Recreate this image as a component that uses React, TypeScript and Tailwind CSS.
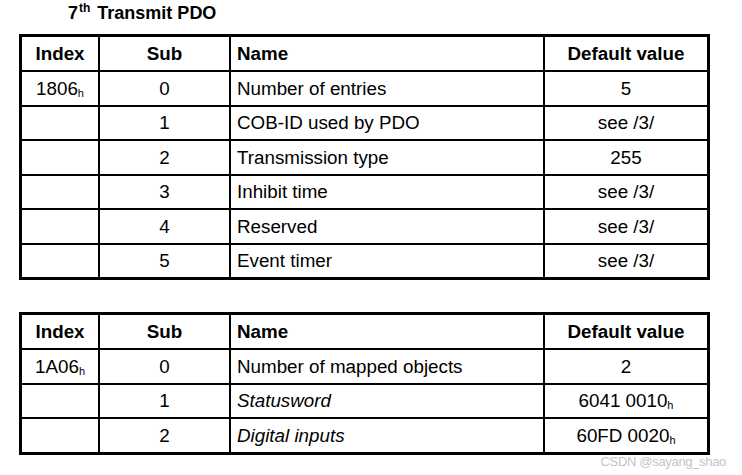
const font = { fontFamily: '"Liberation Sans", Arial, sans-serif' };

type Row = { index?: string; sub: string; name: string; value: string; valueSub?: boolean; italic?: boolean };

const pdoRows: Row[] = [
  { index: "1806", sub: "0", name: "Number of entries", value: "5" },
  { sub: "1", name: "COB-ID used by PDO", value: "see /3/" },
  { sub: "2", name: "Transmission type", value: "255" },
  { sub: "3", name: "Inhibit time", value: "see /3/" },
  { sub: "4", name: "Reserved", value: "see /3/" },
  { sub: "5", name: "Event timer", value: "see /3/" },
];

const mapRows: Row[] = [
  { index: "1A06", sub: "0", name: "Number of mapped objects", value: "2" },
  { sub: "1", name: "Statusword", value: "6041 0010", valueSub: true, italic: true },
  { sub: "2", name: "Digital inputs", value: "60FD 0020", valueSub: true, italic: true },
];

function Hex({ children }: { children: string }) {
  return (
    <span>
      {children}
      <span className="text-[11px] relative top-[2px]">h</span>
    </span>
  );
}

function PdoTable({ rows }: { rows: Row[] }) {
  const cell = "bg-white flex items-center pt-[2px]";
  return (
    <div className="w-[691px] border-[3px] border-black bg-black grid grid-cols-[76px_129px_312px_162px] gap-[2px] text-[18.8px] text-black leading-none">
      <div className={`${cell} h-[33px] justify-center font-bold`}>Index</div>
      <div className={`${cell} h-[33px] justify-center font-bold`}>Sub</div>
      <div className={`${cell} h-[33px] pl-[6px] font-bold`}>Name</div>
      <div className={`${cell} h-[33px] justify-center font-bold`}>Default value</div>
      {rows.map((r, i) => (
        <div key={i} className="contents">
          <div className={`${cell} h-[32.5px] justify-center`}>{r.index ? <Hex>{r.index}</Hex> : null}</div>
          <div className={`${cell} h-[32.5px] justify-center`}>{r.sub}</div>
          <div className={`${cell} h-[32.5px] pl-[6px] ${r.italic ? "italic" : ""}`}>{r.name}</div>
          <div className={`${cell} h-[32.5px] justify-center`}>{r.valueSub ? <Hex>{r.value}</Hex> : r.value}</div>
        </div>
      ))}
    </div>
  );
}

export default function App() {
  return (
    <div className="relative w-[742px] h-[475px] bg-white overflow-hidden" style={font}>
      <div className="pl-[19px] flex flex-col">
        <div className="h-[34px] pl-[49px] pt-[4px] text-[18px] font-bold text-black leading-none">
          7<span className="text-[12px] relative -top-[7px] ml-[1px] mr-[2px]">th</span> Transmit PDO
        </div>
        <PdoTable rows={pdoRows} />
        <div className="h-[32px]" />
        <PdoTable rows={mapRows} />
      </div>
      <div className="absolute right-[16px] bottom-[4px] text-[13px] text-[#c4c4c4] tracking-tight">
        CSDN @sayang_shao
      </div>
    </div>
  );
}
